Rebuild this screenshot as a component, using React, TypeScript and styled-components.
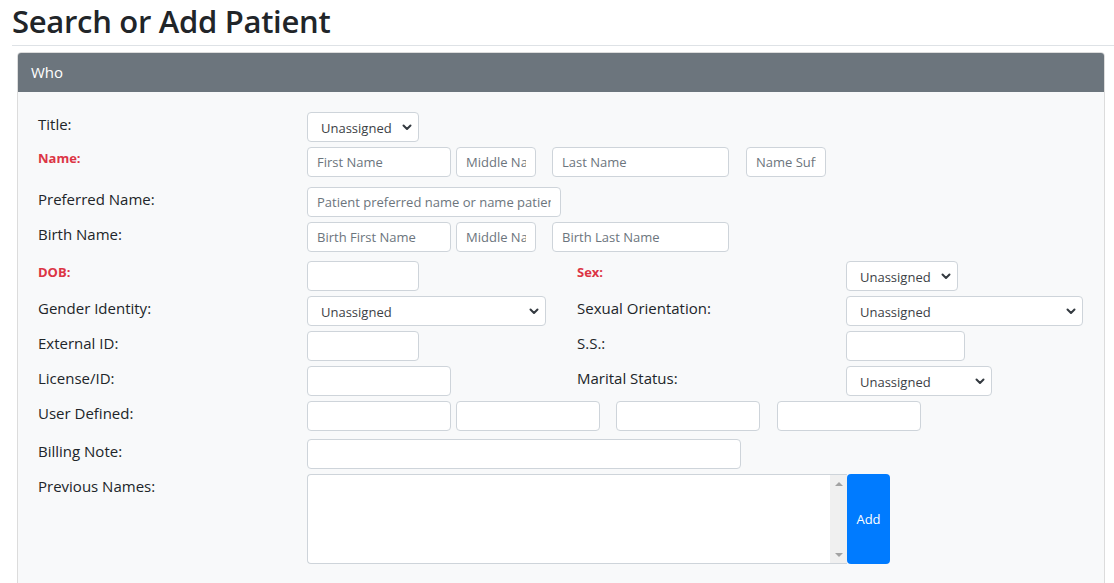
import React from "react";
import styled, { createGlobalStyle } from "styled-components";

const Global = createGlobalStyle`
  html, body { margin: 0; padding: 0; background: #fff; }
  body { font-family: "Open Sans", "Noto Sans", sans-serif; color: #212529; overflow: hidden; }
  * { box-sizing: border-box; }
`;

const Page = styled.div`
  padding-left: 12px;
`;

const Heading = styled.h2`
  margin: 0;
  padding-top: 1px;
  font-size: 31px;
  font-weight: 600;
  line-height: 40px;
  color: #212529;
  letter-spacing: -0.3px;
`;

const Rule = styled.hr`
  margin: 4px 0 6px 0;
  border: 0;
  border-top: 1px solid #dee2e6;
`;

const Card = styled.section`
  margin: 0 9px 0 5px;
  border: 1px solid #dcdcdc;
  border-radius: 4px 4px 0 0;
  background: #f8f9fa;
  height: 560px;
  overflow: hidden;
`;

const CardHeader = styled.div`
  background: #6c757d;
  color: #fff;
  font-size: 15px;
  height: 39px;
  line-height: 39px;
  padding-left: 13px;
`;

const CardBody = styled.div`
  padding: 20px 20px 0 20px;
`;

const Row = styled.div<{ $mt?: number }>`
  display: flex;
  align-items: flex-start;
  margin-top: ${(p) => p.$mt ?? 5}px;
`;

const Label = styled.div<{ $req?: boolean; $w?: number }>`
  flex: none;
  width: ${(p) => p.$w ?? 269}px;
  font-size: ${(p) => (p.$req ? 13 : 15)}px;
  font-weight: ${(p) => (p.$req ? 700 : 400)};
  color: ${(p) => (p.$req ? "#dc3545" : "#212529")};
  line-height: 22px;
  padding-top: ${(p) => (p.$req ? 0 : 1)}px;
`;

const Fields = styled.div<{ $w?: number }>`
  display: flex;
  align-items: flex-start;
  ${(p) => (p.$w ? `width: ${p.$w}px; flex: none;` : "flex: 1;")}
`;

const Input = styled.input<{ $w: number; $ml?: number }>`
  width: ${(p) => p.$w}px;
  margin-left: ${(p) => p.$ml ?? 0}px;
  height: 30px;
  border: 1px solid #ced4da;
  border-radius: 4px;
  background: #fff;
  padding: 0 9px;
  font-family: inherit;
  font-size: 13px;
  color: #495057;
  outline: none;
  &::placeholder { color: #6c757d; opacity: 1; }
`;

const SelectWrap = styled.div<{ $w: number }>`
  position: relative;
  width: ${(p) => p.$w}px;
  height: 30px;
`;

const Select = styled.select`
  appearance: none;
  -webkit-appearance: none;
  width: 100%;
  height: 30px;
  border: 1px solid #ced4da;
  border-radius: 4px;
  background: #fff;
  padding: 1px 0 0 13px;
  font-family: inherit;
  font-size: 13px;
  color: #3c4146;
  outline: none;
`;

const Chevron = styled.svg`
  position: absolute;
  right: 7px;
  top: 12px;
  pointer-events: none;
`;

const TextAreaBox = styled.div`
  display: flex;
  width: 540px;
  height: 90px;
  border: 1px solid #ced4da;
  border-right: 0;
  border-radius: 4px 0 0 4px;
  background: #fff;
  overflow: hidden;
`;

const TextArea = styled.textarea`
  flex: 1;
  border: 0;
  background: transparent;
  resize: none;
  outline: none;
  font-family: inherit;
  overflow: hidden;
`;

const ScrollTrack = styled.div`
  flex: none;
  width: 17px;
  background: #f0f0f0;
  display: flex;
  flex-direction: column;
  align-items: center;
  justify-content: space-between;
  padding: 7px 0 6px;
`;

const Arrow = styled.span<{ $down?: boolean }>`
  width: 0;
  height: 0;
  border-left: 4px solid transparent;
  border-right: 4px solid transparent;
  ${(p) =>
    p.$down ? "border-top: 4px solid #a3a3a3;" : "border-bottom: 4px solid #a3a3a3;"}
`;

const AddButton = styled.button`
  width: 43px;
  height: 90px;
  border: 0;
  border-radius: 4px;
  background: #007bff;
  color: #fff;
  font-family: inherit;
  font-size: 13px;
  padding: 0;
`;

const Dropdown: React.FC<{ w: number }> = ({ w }) => (
  <SelectWrap $w={w}>
    <Select defaultValue="u">
      <option value="u">Unassigned</option>
    </Select>
    <Chevron width="10" height="7" viewBox="0 0 10 7">
      <path d="M1.5 1.5L5 5l3.5-3.5" fill="none" stroke="#343a40" strokeWidth="2" strokeLinecap="round" strokeLinejoin="round" />
    </Chevron>
  </SelectWrap>
);

export default function App() {
  return (
    <Page>
      <Global />
      <Heading>Search or Add Patient</Heading>
      <Rule />
      <Card>
        <CardHeader>Who</CardHeader>
        <CardBody>
          <Row $mt={0}>
            <Label>Title:</Label>
            <Fields>
              <Dropdown w={112} />
            </Fields>
          </Row>
          <Row>
            <Label $req>Name:</Label>
            <Fields>
              <Input $w={144} placeholder="First Name" />
              <Input $w={80} $ml={5} placeholder="Middle Name" />
              <Input $w={177} $ml={16} placeholder="Last Name" />
              <Input $w={80} $ml={17} placeholder="Name Suffix" />
            </Fields>
          </Row>
          <Row $mt={10}>
            <Label>Preferred Name:</Label>
            <Fields>
              <Input $w={254} placeholder="Patient preferred name or name patient is commonly known by" />
            </Fields>
          </Row>
          <Row $mt={5}>
            <Label>Birth Name:</Label>
            <Fields>
              <Input $w={144} placeholder="Birth First Name" />
              <Input $w={80} $ml={5} placeholder="Middle Name" />
              <Input $w={177} $ml={16} placeholder="Birth Last Name" />
            </Fields>
          </Row>
          <Row $mt={9}>
            <Label $req>DOB:</Label>
            <Fields $w={270}>
              <Input $w={112} />
            </Fields>
            <Label $req>Sex:</Label>
            <Fields>
              <Dropdown w={112} />
            </Fields>
          </Row>
          <Row>
            <Label>Gender Identity:</Label>
            <Fields $w={270}>
              <Dropdown w={239} />
            </Fields>
            <Label>Sexual Orientation:</Label>
            <Fields>
              <Dropdown w={237} />
            </Fields>
          </Row>
          <Row>
            <Label>External ID:</Label>
            <Fields $w={270}>
              <Input $w={112} />
            </Fields>
            <Label>S.S.:</Label>
            <Fields>
              <Input $w={119} />
            </Fields>
          </Row>
          <Row>
            <Label>License/ID:</Label>
            <Fields $w={270}>
              <Input $w={144} />
            </Fields>
            <Label>Marital Status:</Label>
            <Fields>
              <Dropdown w={146} />
            </Fields>
          </Row>
          <Row>
            <Label>User Defined:</Label>
            <Fields>
              <Input $w={144} />
              <Input $w={144} $ml={5} />
              <Input $w={144} $ml={16} />
              <Input $w={144} $ml={17} />
            </Fields>
          </Row>
          <Row $mt={8}>
            <Label>Billing Note:</Label>
            <Fields>
              <Input $w={434} />
            </Fields>
          </Row>
          <Row>
            <Label>Previous Names:</Label>
            <Fields>
              <TextAreaBox>
                <TextArea />
                <ScrollTrack>
                  <Arrow />
                  <Arrow $down />
                </ScrollTrack>
              </TextAreaBox>
              <AddButton>Add</AddButton>
            </Fields>
          </Row>
        </CardBody>
      </Card>
    </Page>
  );
}
